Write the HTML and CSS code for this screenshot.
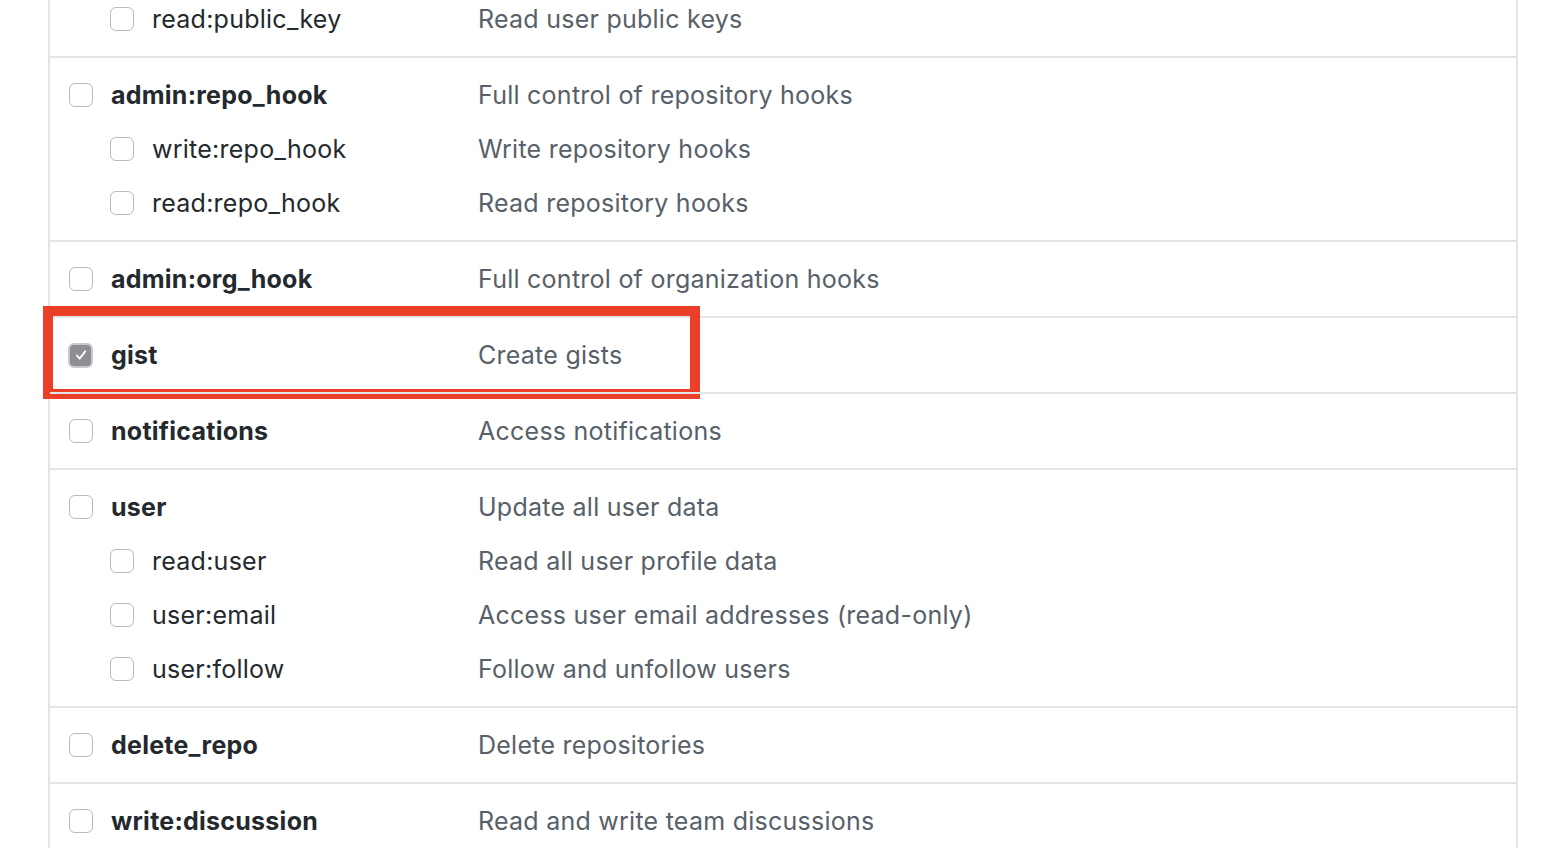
FILE: index.html
```html
<!DOCTYPE html>
<html lang="en">
<head>
<meta charset="utf-8">
<title>Scopes</title>
<link rel="stylesheet" href="styles.css">
</head>
<body>
<div class="scopes">
  <div class="row first">
    <div class="item child"><div class="label"><span class="cb"></span><span class="name">read:public_key</span></div><span class="desc">Read user public keys</span></div>
  </div>
  <div class="row">
    <div class="item parent"><div class="label"><span class="cb"></span><span class="name">admin:repo_hook</span></div><span class="desc">Full control of repository hooks</span></div>
    <div class="item child"><div class="label"><span class="cb"></span><span class="name">write:repo_hook</span></div><span class="desc">Write repository hooks</span></div>
    <div class="item child"><div class="label"><span class="cb"></span><span class="name">read:repo_hook</span></div><span class="desc">Read repository hooks</span></div>
  </div>
  <div class="row">
    <div class="item parent"><div class="label"><span class="cb"></span><span class="name">admin:org_hook</span></div><span class="desc">Full control of organization hooks</span></div>
  </div>
  <div class="row">
    <div class="item parent"><div class="label"><span class="cb checked"><svg viewBox="0 0 24 24" width="24" height="24"><path d="M7 12.6 L10.4 16.4 L17 7.6" fill="none" stroke="#fff" stroke-width="2.2" stroke-linecap="round" stroke-linejoin="round"/></svg></span><span class="name">gist</span></div><span class="desc">Create gists</span></div>
    <div class="annotation"></div>
  </div>
  <div class="row">
    <div class="item parent"><div class="label"><span class="cb"></span><span class="name">notifications</span></div><span class="desc">Access notifications</span></div>
  </div>
  <div class="row">
    <div class="item parent"><div class="label"><span class="cb"></span><span class="name">user</span></div><span class="desc">Update all user data</span></div>
    <div class="item child"><div class="label"><span class="cb"></span><span class="name">read:user</span></div><span class="desc">Read all user profile data</span></div>
    <div class="item child"><div class="label"><span class="cb"></span><span class="name">user:email</span></div><span class="desc">Access user email addresses (read-only)</span></div>
    <div class="item child"><div class="label"><span class="cb"></span><span class="name">user:follow</span></div><span class="desc">Follow and unfollow users</span></div>
  </div>
  <div class="row">
    <div class="item parent"><div class="label"><span class="cb"></span><span class="name">delete_repo</span></div><span class="desc">Delete repositories</span></div>
  </div>
  <div class="row">
    <div class="item parent"><div class="label"><span class="cb"></span><span class="name">write:discussion</span></div><span class="desc">Read and write team discussions</span></div>
  </div>
</div>
</body>
</html>
```

FILE: styles.css
```css
html, body {
  margin: 0;
  padding: 0;
  background: #ffffff;
  overflow: hidden;
  height: 848px;
}

body {
  font-family: Inter, "Noto Sans", "Liberation Sans", sans-serif;
  font-size: 25px;
  color: #24292e;
}

.scopes {
  box-sizing: border-box;
  width: 1470px;
  margin: -8px 0 0 48px;
  border-left: 2px solid #e1e4e8;
  border-right: 2px solid #e1e4e8;
}

.row {
  position: relative;
  border-top: 2px solid #e1e4e8;
  padding: 10px 0;
}

.row.first {
  border-top: 0;
  padding-top: 0;
}

.item {
  display: flex;
  align-items: center;
  height: 54px;
  padding-left: 19px;
}

.label {
  display: flex;
  align-items: center;
  gap: 18px;
  width: 409px;
  flex: none;
}

.child .label {
  margin-left: 41px;
  width: 368px;
}

.cb {
  box-sizing: border-box;
  width: 24px;
  height: 24px;
  flex: none;
  border: 1.5px solid #bababa;
  border-radius: 6px;
  background: #ffffff;
  display: flex;
  align-items: center;
  justify-content: center;
}

.cb.checked {
  width: 25px;
  height: 25px;
  margin-left: -1px;
  background: #8e8e92;
  border: 2px solid #c9c9cc;
}

.cb.checked svg {
  width: 20px;
  height: 20px;
}

.name {
  white-space: nowrap;
  letter-spacing: 0.25px;
}

.parent .name {
  font-weight: 700;
}

.desc {
  color: #586069;
  white-space: nowrap;
  letter-spacing: 0.25px;
}

.annotation {
  position: absolute;
  top: -12px;
  left: -7px;
  width: 657px;
  height: 93px;
  box-sizing: border-box;
  border: 10px solid #eb4027;
  pointer-events: none;
}
```
